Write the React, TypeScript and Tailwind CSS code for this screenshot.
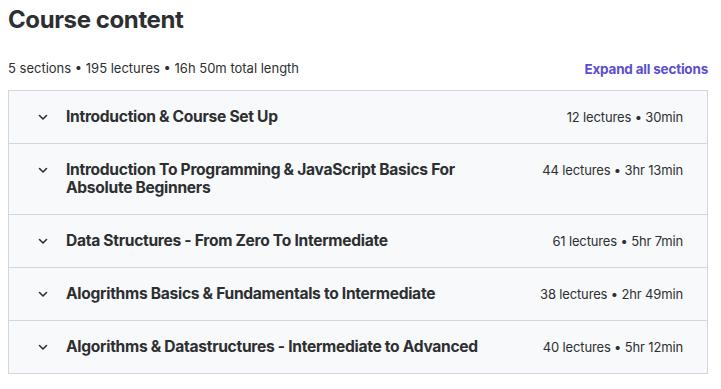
const sections = [
  { title: 'Introduction & Course Set Up', meta: '12 lectures • 30min' },
  { title: 'Introduction To Programming & JavaScript Basics For Absolute Beginners', meta: '44 lectures • 3hr 13min' },
  { title: 'Data Structures - From Zero To Intermediate', meta: '61 lectures • 5hr 7min' },
  { title: 'Alogrithms Basics & Fundamentals to Intermediate', meta: '38 lectures • 2hr 49min' },
  { title: 'Algorithms & Datastructures - Intermediate to Advanced', meta: '40 lectures • 5hr 12min' },
];

function Chevron() {
  return (
    <svg width="12" height="12" viewBox="0 0 24 24" fill="none" stroke="#2d2f31" strokeWidth="3.2" strokeLinecap="round" strokeLinejoin="round">
      <path d="M5 9l7 7 7-7" />
    </svg>
  );
}

export default function App() {
  return (
    <div className="w-[721px] h-[389px] bg-white px-2 text-[#2d2f31]" style={{ fontFamily: 'Inter, "Noto Sans", sans-serif' }}>
      <h2 className="text-[24px] font-bold leading-[1.2] pt-[6px] tracking-[-0.4px]">Course content</h2>
      <div className="w-[700px] flex items-center justify-between mt-[24px] h-[20px]">
        <span className="text-[13px]">5 sections • 195 lectures • 16h 50m total length</span>
        <button className="text-[13.5px] font-bold text-[#5a4fd0] tracking-[-0.2px]">Expand all sections</button>
      </div>
      <div className="w-[700px] mt-[11px] border border-[#d1d7dc] bg-[#f7f9fa]">
        {sections.map((s, i) => (
          <div key={i} className={`flex items-start justify-between pl-[28px] pr-[24px] py-[17px] ${i > 0 ? 'border-t border-[#d1d7dc]' : ''}`}>
            <div className="flex items-start">
              <span className="w-[12px] h-[18px] flex items-center mr-[17px]">
                <Chevron />
              </span>
              <span className="text-[15.6px] font-bold leading-[18px] max-w-[440px] tracking-[-0.3px]">{s.title}</span>
            </div>
            <span className="text-[13px] leading-[18px] whitespace-nowrap tracking-[-0.15px]">{s.meta}</span>
          </div>
        ))}
      </div>
    </div>
  );
}
